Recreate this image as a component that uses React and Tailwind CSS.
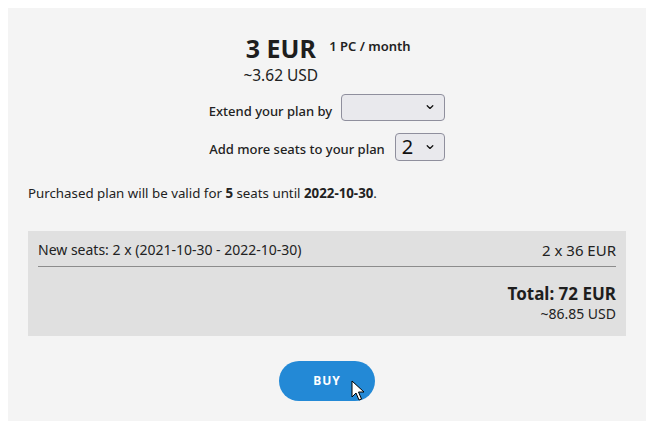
import React from "react";

const font = { fontFamily: '"Segoe UI", "Noto Sans", "Open Sans", sans-serif' };

function Chevron() {
  return (
    <svg width="10" height="10" viewBox="0 0 10 10" className="shrink-0">
      <path d="M2.2 3.8 L5 6.4 L7.8 3.8" fill="none" stroke="#111" strokeWidth="1.3" strokeLinecap="round" strokeLinejoin="round" />
    </svg>
  );
}

function FakeSelect({ value, className }) {
  return (
    <div className={`flex items-center justify-between rounded-[4px] border border-[#8f8f9d] bg-[#e9e9ed] pl-[6px] pr-[9px] ${className}`}>
      <span className="text-[20px] leading-none text-[#111]">{value}</span>
      <Chevron />
    </div>
  );
}

export default function App() {
  return (
    <div className="w-[657px] h-[430px] bg-white p-2" style={font}>
      <div className="relative w-[638px] h-[413px] bg-[#f4f4f4] px-5 text-[#222]">
        <div className="flex justify-center pt-[25px]">
          <div className="flex items-start">
            <div className="flex flex-col items-center">
              <div className="text-[25px] font-bold leading-[30px] text-[#1e1e1e]">3 EUR</div>
              <div className="text-[15.5px] leading-[20px] mt-[2px]">~3.62 USD</div>
            </div>
            <div className="ml-[11px] mt-[5px] text-[13px] font-semibold leading-[16px]">1 PC / month</div>
          </div>
        </div>
        <div className="mt-[8px] flex items-center justify-center">
          <span className="text-[13px] font-medium mr-[9px] mt-[9px]">Extend your plan by</span>
          <FakeSelect value="" className="w-[104px] h-[27px]" />
        </div>
        <div className="mt-[11px] flex items-center justify-center">
          <span className="text-[13px] font-medium mr-[10px] mt-[7px]">Add more seats to your plan</span>
          <FakeSelect value="2" className="w-[50px] h-[28px]" />
        </div>
        <div className="mt-[22px] text-[13.3px] leading-[20px]">
          Purchased plan will be valid for <span className="font-bold">5</span> seats until <span className="font-bold">2022-10-30</span>.
        </div>
        <div className="mt-[28px] bg-[#e0e0e0] h-[105px] px-[10px] pt-[9px]">
          <div className="flex items-end justify-between pb-[6px] border-b border-[#8c8c8c]">
            <span className="text-[14px] leading-[20px]">New seats: 2 x (2021-10-30 - 2022-10-30)</span>
            <span className="text-[15px] leading-[20px]">2 x 36 EUR</span>
          </div>
          <div className="flex flex-col items-end mt-[16px]">
            <span className="text-[17px] font-bold leading-[22px] text-[#1e1e1e]">Total: 72 EUR</span>
            <span className="text-[14px] leading-[18px]">~86.85 USD</span>
          </div>
        </div>
        <div className="flex justify-center mt-[25px]">
          <div className="relative">
            <button className="w-[96px] h-[40px] rounded-full bg-[#2389d6] text-white text-[12px] font-bold tracking-[1px]">BUY</button>
            <svg className="absolute left-[72px] top-[19px]" width="14" height="22" viewBox="0 0 14 22">
              <path d="M1 1 L1 17 L5 13 L8 20 L10.5 19 L7.5 12 L13 12 Z" fill="#fff" stroke="#000" strokeWidth="1" strokeLinejoin="round" />
            </svg>
          </div>
        </div>
      </div>
    </div>
  );
}
